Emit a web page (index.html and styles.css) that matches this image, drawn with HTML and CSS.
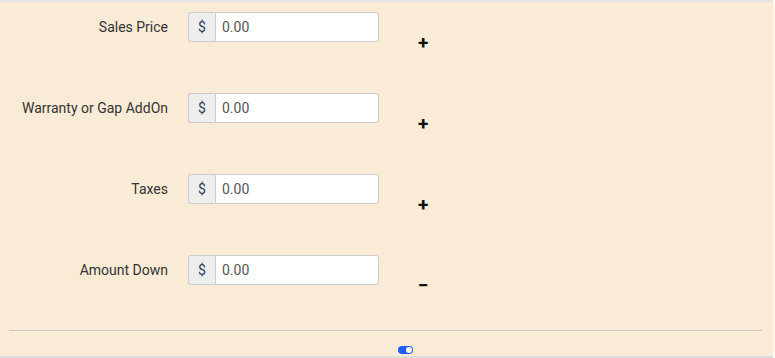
FILE: index.html
```html
<!DOCTYPE html>
<html lang="en">
<head>
  <meta charset="UTF-8">
  <meta name="viewport" content="width=device-width, initial-scale=1.0">
  <title>Deal Calculator</title>
  <link rel="stylesheet" href="styles.css">
</head>
<body>
  <div class="panel">
    <div class="rows">
      <div class="row">
        <label class="row-label">Sales Price</label>
        <div class="input-group">
          <span class="addon">$</span>
          <input type="text" class="amount" value="0.00">
        </div>
        <span class="op">+</span>
      </div>

      <div class="row">
        <label class="row-label">Warranty or Gap AddOn</label>
        <div class="input-group">
          <span class="addon">$</span>
          <input type="text" class="amount" value="0.00">
        </div>
        <span class="op">+</span>
      </div>

      <div class="row">
        <label class="row-label">Taxes</label>
        <div class="input-group">
          <span class="addon">$</span>
          <input type="text" class="amount" value="0.00">
        </div>
        <span class="op">+</span>
      </div>

      <div class="row">
        <label class="row-label">Amount Down</label>
        <div class="input-group">
          <span class="addon">$</span>
          <input type="text" class="amount" value="0.00">
        </div>
        <span class="op op-minus">&minus;</span>
      </div>
    </div>

    <hr class="divider">

    <div class="switch-row">
      <span class="switch"><span class="knob"></span></span>
    </div>
  </div>
</body>
</html>
```

FILE: styles.css
```css
html {
  background: #fdf6ec;
}
body {
  font-family: Roboto, 'Liberation Sans', sans-serif;
  font-size: 14px;
  color: #333;
  background: #faebd7;
  margin: 0 2px 0 0;
  border-top: 2px solid #e4e4e4;
  border-bottom: 2px solid #dcdcdc;
}
.panel {
  padding-top: 10px;
  padding-bottom: 2px;
}
.rows {
  display: flex;
  flex-direction: column;
  gap: 51px;
}
.row {
  display: flex;
  align-items: flex-start;
  height: 30px;
}
.row-label {
  width: 168px;
  text-align: right;
  line-height: 30px;
  margin-right: 20px;
}
.input-group {
  display: flex;
  width: 191px;
  height: 30px;
}
.addon {
  width: 26px;
  background: #eee;
  border: 1px solid #ccc;
  border-right: none;
  border-radius: 3px 0 0 3px;
  color: #2c3e60;
  text-align: center;
  line-height: 28px;
  font-size: 14px;
}
.amount {
  flex: 1;
  min-width: 0;
  border: 1px solid #ccc;
  border-radius: 0 3px 3px 0;
  padding: 0 6px;
  font-family: inherit;
  font-size: 14px;
  color: #555;
  background: #fff;
}
.op {
  margin-left: 39px;
  margin-top: 22px;
  font-size: 19px;
  font-weight: 700;
  color: #111;
  line-height: 18px;
}
.op-minus {
  margin-top: 22px;
  margin-left: 39px;
}
.divider {
  margin: 45px 11px 0 9px;
  border: none;
  border-top: 1px solid #ccc;
}
.switch-row {
  display: flex;
  padding-top: 15px;
  padding-left: 398px;
  line-height: 0;
}
.switch {
  display: inline-flex;
  align-items: center;
  justify-content: flex-end;
  width: 15px;
  height: 8px;
  border-radius: 4px;
  background: #1f5bff;
  padding: 0 1px;
  box-sizing: border-box;
}
.knob {
  width: 6px;
  height: 6px;
  border-radius: 50%;
  background: #fff;
}
```
